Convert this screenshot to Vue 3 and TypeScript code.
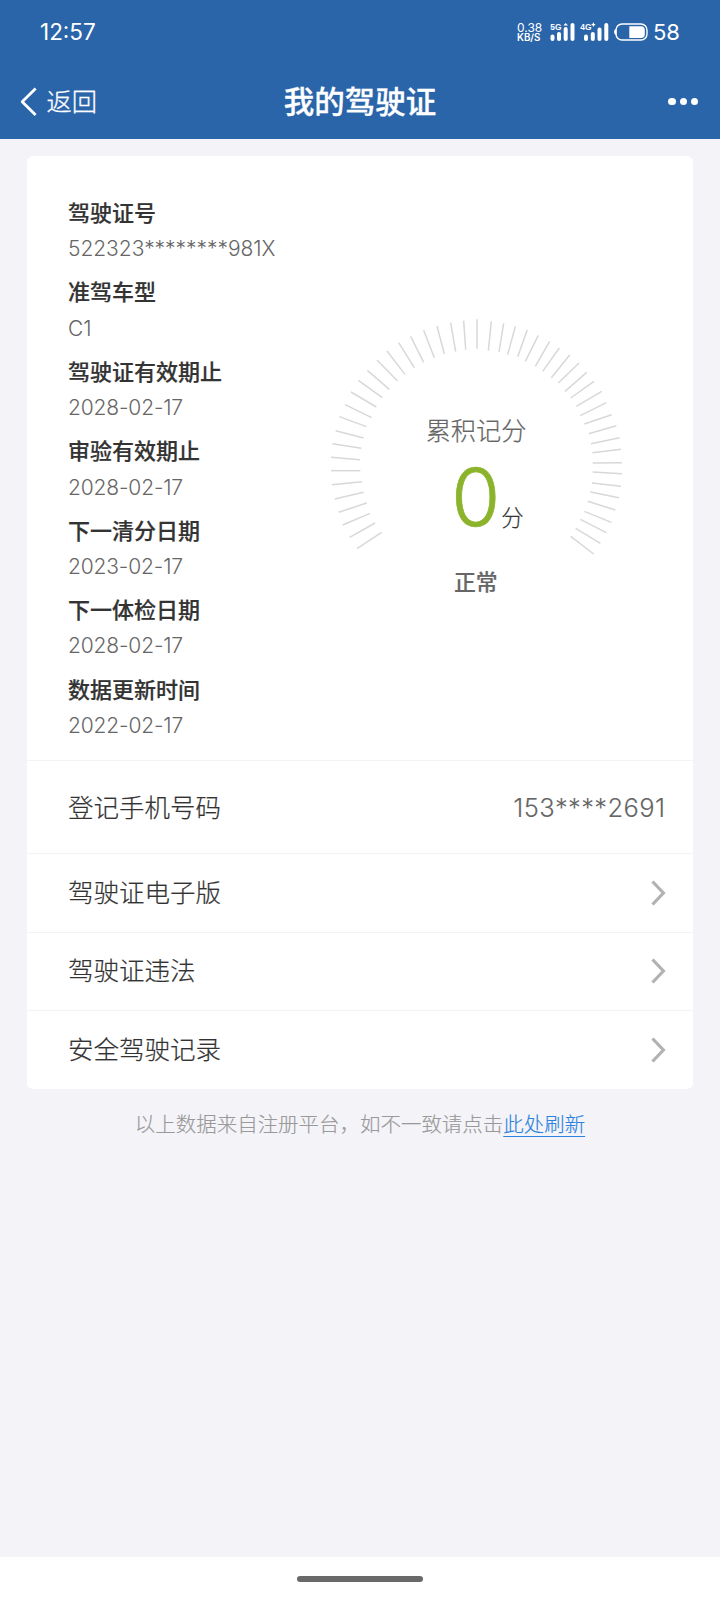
<script setup lang="ts">
interface Field { label: string; value: string }

const fields: Field[] = [
  { label: '驾驶证号', value: '522323********981X' },
  { label: '准驾车型', value: 'C1' },
  { label: '驾驶证有效期止', value: '2028-02-17' },
  { label: '审验有效期止', value: '2028-02-17' },
  { label: '下一清分日期', value: '2023-02-17' },
  { label: '下一体检日期', value: '2028-02-17' },
  { label: '数据更新时间', value: '2022-02-17' },
]

const links: string[] = ['驾驶证电子版', '驾驶证违法', '安全驾驶记录']

// Dial ticks as [outer x, outer y, inner x, inner y], in thirds of a pixel.
const ticks: number[][] = [
  [111, 716, 185, 667], [89, 682, 165, 639], [68, 645, 150, 610], [56, 607, 140, 579],
  [44, 567, 131, 547], [36, 524, 126, 515], [33, 482, 121, 482], [33, 442, 120, 449],
  [37, 401, 124, 415], [47, 362, 131, 384], [58, 320, 139, 350], [75, 284, 155, 323],
  [93, 246, 169, 291], [115, 211, 187, 263], [142, 181, 208, 238], [171, 150, 232, 212],
  [201, 123, 255, 193], [236, 98, 283, 173], [272, 79, 311, 157], [311, 61, 343, 143],
  [351, 48, 373, 132], [392, 38, 407, 125], [431, 32, 437, 119], [471, 28, 471, 116],
  [514, 34, 505, 122], [551, 40, 537, 126], [586, 49, 563, 134], [622, 59, 593, 140],
  [655, 76, 616, 154], [689, 94, 646, 169], [718, 114, 668, 184], [749, 135, 694, 203],
  [777, 159, 715, 219], [800, 187, 735, 244], [822, 214, 752, 264], [845, 244, 769, 289],
  [859, 278, 781, 317], [875, 314, 793, 342], [889, 347, 806, 371], [899, 383, 813, 401],
  [903, 418, 817, 428], [905, 458, 818, 459], [906, 491, 818, 486], [903, 529, 816, 519],
  [897, 563, 811, 546], [886, 600, 803, 574], [874, 637, 793, 604], [859, 668, 781, 628],
  [841, 700, 767, 655], [821, 732, 752, 679],
]
</script>

<template>
  <div class="page">
    <header class="top">
      <div class="status">
        <span class="clock">12:57</span>
        <div class="indicators">
          <div class="speed"><span class="num">0.38</span><span class="unit">KB/S</span></div>
          <svg class="signals" width="100" height="24" viewBox="0 0 100 24">
            <g fill="#fff">
              <text x="0.3" y="9.6" class="net">5G</text>
              <rect x="0.5" y="14.5" width="4" height="6.5" rx="2" />
              <rect x="7" y="12" width="4" height="9" rx="2" />
              <rect x="13.7" y="7" width="4" height="14" rx="2" />
              <path d="M13.4 5.6 L15.7 3 L18 5.6 Z" />
              <rect x="20.5" y="3" width="4" height="18" rx="2" />
              <text x="30.3" y="9.6" class="net">4G</text>
              <path d="M41.6 4.6 H45.2 M43.4 2.8 V6.4" stroke="#fff" stroke-width="1.2" />
              <rect x="34" y="14.5" width="4" height="6.5" rx="2" />
              <rect x="40.8" y="12" width="4" height="9" rx="2" />
              <rect x="47.5" y="7.5" width="4" height="13.5" rx="2" />
              <rect x="54.3" y="3" width="4" height="18" rx="2" />
              <path d="M66.5 8.5 Q64 9.3 64 12 Q64 14.7 66.5 15.5 Z" />
              <path d="M79.3 6.2 H91 Q94.8 6.2 94.8 10 V14.2 Q94.8 18 91 18 H79.3 Z" />
            </g>
            <rect x="66" y="4" width="31" height="16" rx="6" fill="none" stroke="#fff" stroke-width="1.4" />
          </svg>
          <span class="battery">58</span>
        </div>
      </div>
      <nav class="nav">
        <div class="back">
          <svg width="18" height="30" viewBox="0 0 18 30"><path d="M15.6 1.6 L2.2 14.8 L15.6 28" fill="none" stroke="#fff" stroke-width="2.8" stroke-linejoin="round" /></svg>
          <span>返回</span>
        </div>
        <h1>我的驾驶证</h1>
        <div class="more"><i /><i /><i /></div>
      </nav>
    </header>

    <main class="card">
      <section class="summary">
        <dl class="fields">
          <div v-for="f in fields" :key="f.label" class="field">
            <dt>{{ f.label }}</dt>
            <dd :class="{ date: f.value.includes('-') }">{{ f.value }}</dd>
          </div>
        </dl>
        <div class="dial">
          <svg class="ticks" width="310" height="300" viewBox="0 0 930 900">
            <line v-for="(t, i) in ticks" :key="i" :x1="t[0]" :y1="t[1]" :x2="t[2]" :y2="t[3]" />
            <text x="468" y="390" class="caption">累积记分</text>
            <text x="467.5" y="649" class="score">0</text>
            <text x="577" y="647" class="points">分</text>
            <text x="467.5" y="839" class="state">正常</text>
          </svg>
        </div>
      </section>
      <div class="row phone"><span>登记手机号码</span><span class="number">153****2691</span></div>
      <div v-for="l in links" :key="l" class="row">
        <span>{{ l }}</span>
        <svg width="15" height="26" viewBox="0 0 15 26"><path d="M1.5 1.5 L12.4 13 L1.5 24.5" fill="none" stroke="#b2b2b2" stroke-width="3.2" /></svg>
      </div>
    </main>

    <p class="note">以上数据来自注册平台，如不一致请点击<a>此处刷新</a></p>
    <footer class="gesture"><i /></footer>
  </div>
</template>

<style>
body { margin: 0; background: #f3f3f8; }
</style>

<style scoped>
.page {
  width: 720px;
  height: 1600px;
  display: flex;
  flex-direction: column;
  background: #f3f3f8;
  font-family: Inter, "Noto Sans CJK SC", sans-serif;
  font-weight: 300;
  overflow: hidden;
}
.top { height: 139px; flex: none; background: #2b65a9; color: #fff; }
.status { height: 64px; padding: 0 40px; display: flex; justify-content: space-between; align-items: center; box-sizing: border-box; }
.clock { font-size: 22.5px; line-height: 26px; font-weight: 400; }
.indicators { display: flex; align-items: center; height: 24px; }
.speed { width: 34px; padding-left: 1px; box-sizing: border-box; display: flex; flex-direction: column; font-size: 12px; line-height: 11px; font-weight: 400; }
.speed .unit { font-size: 9.8px; line-height: 10px; font-weight: 600; }
.signals { display: block; }
.net { font: 700 8.4px "Liberation Sans", sans-serif; }
.battery { width: 27px; margin-left: 3px; font-size: 22px; font-weight: 400; line-height: 24px; }
.nav { height: 75px; padding: 0 22px 0 20px; display: grid; grid-template-columns: 1fr auto 1fr; align-items: center; box-sizing: border-box; }
.back { display: flex; align-items: center; gap: 8.5px; font-size: 25.3px; line-height: 34px; -webkit-text-stroke: 0.3px currentColor; }
.back svg { display: block; }
h1 { margin: 0 -1px 0 1px; font-size: 30.5px; line-height: 40px; font-weight: 500; -webkit-text-stroke: 0.3px currentColor; }
.more { display: flex; gap: 4px; justify-content: flex-end; }
.more i { width: 7.2px; height: 7.2px; border-radius: 50%; background: #fff; }
.card { margin: 17px 27px 0; height: 932.5px; flex: none; border-radius: 6px; background: #fff; display: flex; flex-direction: column; }
.summary { height: 604px; flex: none; padding: 39px 63px 0 41px; display: flex; justify-content: space-between; box-sizing: border-box; }
.fields { margin: 0; flex: none; width: 240px; }
.field { height: 79.45px; }
dt { font-size: 22px; line-height: 36px; font-weight: 500; color: #333; -webkit-text-stroke: 0.2px currentColor; }
dd { margin: 0; padding-top: 1.2px; font-size: 21px; line-height: 34px; color: #666; white-space: nowrap; letter-spacing: -0.04px; }
.date { letter-spacing: -0.15px; }
.dial { flex: none; width: 310px; margin: 115px 0 0; }
.ticks { display: block; }
.ticks line { stroke: #d8d8d8; stroke-width: 4.5; }
.ticks text { text-anchor: middle; font-family: Inter, "Noto Sans CJK SC", sans-serif; }
.ticks .caption { font-size: 75.5px; fill: #666; stroke: #666; stroke-width: 0.6px; }
.ticks .score { font-size: 238px; fill: #8cb32c; stroke: #8cb32c; stroke-width: 2px; }
.ticks .points { font-size: 67px; fill: #333; stroke: #333; stroke-width: 0.6px; }
.ticks .state { font-size: 65.5px; font-weight: 500; fill: #666; stroke: #666; stroke-width: 0.6px; }
.row { height: 78.5px; flex: none; padding: 0 27.5px 0 41px; border-top: 1px solid #f3f3f5; display: flex; align-items: center; justify-content: space-between; font-size: 25.5px; line-height: 36px; color: #333; box-sizing: border-box; -webkit-text-stroke: 0.2px currentColor; }
.row svg { display: block; }
.phone { height: 93px; padding-top: 1.5px; }
.number { color: #666; letter-spacing: 0.4px; -webkit-text-stroke: 0.1px currentColor; }
.note { margin: 18px 0 0; text-align: center; font-size: 20.48px; line-height: 36px; color: #999; white-space: nowrap; -webkit-text-stroke: 0.15px currentColor; }
.note a { color: #2c82dc; text-decoration: underline; text-decoration-thickness: 1.3px; text-underline-offset: 4px; }
.gesture { margin-top: auto; height: 43px; flex: none; background: #fff; display: flex; justify-content: center; padding-top: 19px; box-sizing: border-box; }
.gesture i { width: 126px; height: 6px; border-radius: 3px; background: #696969; }
</style>
